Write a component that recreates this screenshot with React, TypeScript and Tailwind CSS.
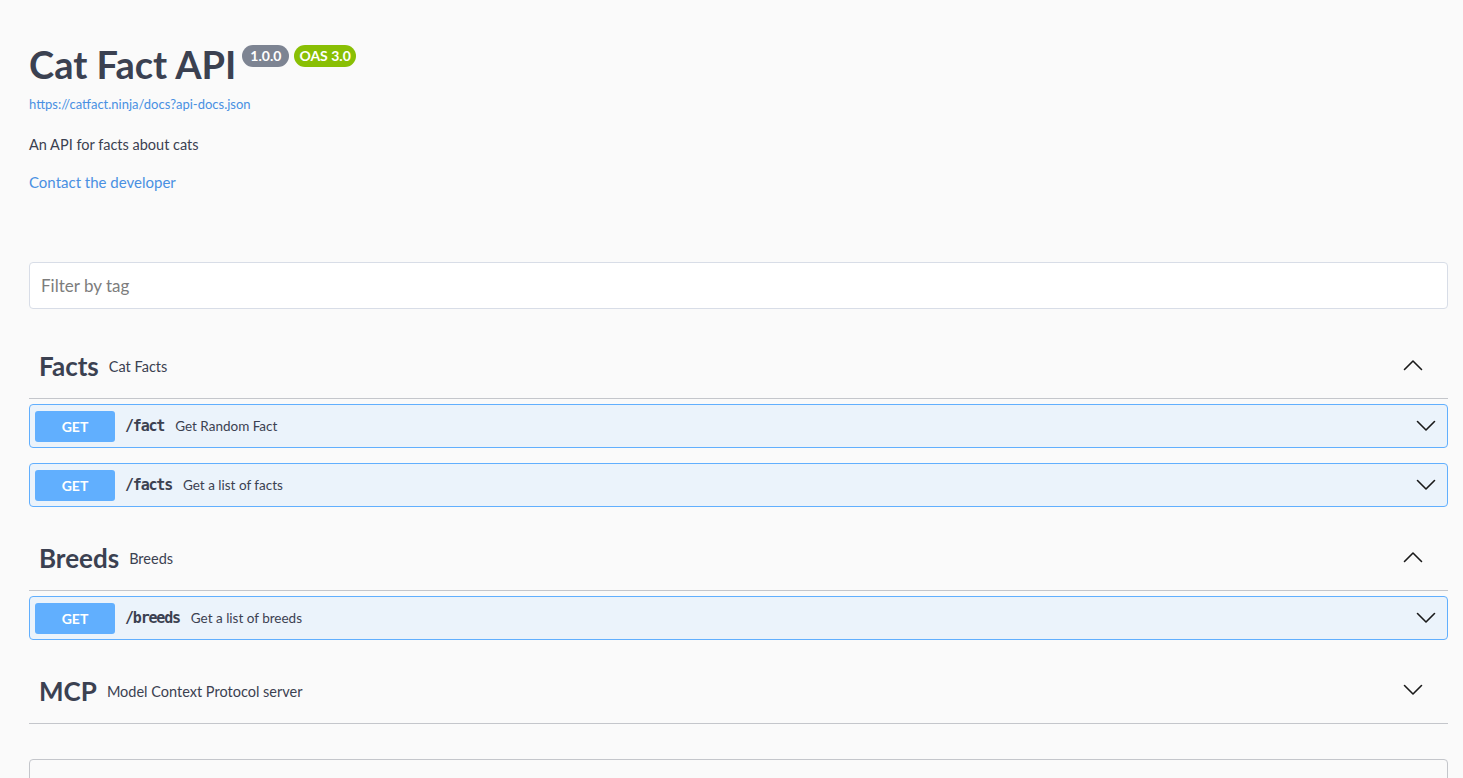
import React from 'react';

interface Op {
    method: string;
    path: string;
    summary: string;
}

interface Tag {
    name: string;
    description: string;
    open: boolean;
    ops: Op[];
}

const tags: Tag[] = [
    {
        name: "Facts", description: "Cat Facts", open: true,
        ops: [
            { method: "GET", path: "/fact", summary: "Get Random Fact" },
            { method: "GET", path: "/facts", summary: "Get a list of facts" },
        ]
    },
    {
        name: "Breeds", description: "Breeds", open: true,
        ops: [{ method: "GET", path: "/breeds", summary: "Get a list of breeds" }]
    },
    { name: "MCP", description: "Model Context Protocol server", open: false, ops: [] },
];

// thin chevrons, like the swagger arrows
const ArrowDown = () => (
    <svg width="20" height="12" viewBox="0 0 20 12" fill="none" className="stroke-[#1a1a1a]">
        <polyline points="1.5,1.5 10,10 18.5,1.5" strokeWidth="1.6" strokeLinecap="round" strokeLinejoin="round" />
    </svg>
);

const ArrowUp = () => (
    <svg width="20" height="12" viewBox="0 0 20 12" fill="none" className="stroke-[#1a1a1a]">
        <polyline points="1.5,10.5 10,2 18.5,10.5" strokeWidth="1.6" strokeLinecap="round" strokeLinejoin="round" />
    </svg>
);

const Operation = ({ op }: { op: Op }) => (
    <div className="mb-[15px] flex h-[44px] items-center rounded-[4px] border border-[#61affe] bg-[#ebf3fb] pl-[5px] pr-[11px]">
        <span className="flex h-[31px] w-[80px] items-center justify-center rounded-[3px] bg-[#61affe] text-[14px] font-bold text-white">
            {op.method}
        </span>
        <span className="ml-[10px] font-['DejaVu_Sans_Mono',monospace] text-[15px] font-semibold tracking-[-1.2px] text-[#3b4151]">
            {op.path}
        </span>
        <span className="ml-[11px] flex-1 text-[13.5px] text-[#3b4151]">{op.summary}</span>
        <ArrowDown />
    </div>
);

const TagSection = ({ tag }: { tag: Tag }) => (
    <div className="mb-[20px]">
        <div className="flex h-[64px] items-center border-b border-[#c4c6cb] pl-[10px] pr-[25px]">
            <h3 className="text-[26px] font-bold text-[#3b4151]">{tag.name}</h3>
            <span className="ml-[10px] flex-1 text-[14.5px] text-[#3b4151]">{tag.description}</span>
            <div className="-mt-[3px]">{tag.open ? <ArrowUp /> : <ArrowDown />}</div>
        </div>
        {tag.open && (
            <div className="mt-[5px]">
                {tag.ops.map(op => <Operation key={op.path} op={op} />)}
            </div>
        )}
    </div>
);

const App = () => {
    return (
        <div className="min-h-screen bg-[#fafafa] font-['Lato',sans-serif] text-[#3b4151]">
            <div className="pl-[29px] pr-[15px] pt-[42px]">
                <div className="flex items-start">
                    <h1 className="text-[38px] font-bold leading-[44px]">Cat Fact API</h1>
                    <span className="ml-[6px] mt-[3px] rounded-full bg-[#7d8492] px-[8px] text-[14px] font-bold leading-[22px] text-white">1.0.0</span>
                    <span className="ml-[5px] mt-[3px] rounded-full bg-[#89bf04] px-[5px] text-[14px] font-bold leading-[22px] text-white">OAS 3.0</span>
                </div>
                <a className="mt-[10px] block text-[13px] leading-[16px] text-[#4990e2]">https://catfact.ninja/docs?api-docs.json</a>
                <p className="mt-[23px] text-[14.5px] leading-[20px]">An API for facts about cats</p>
                <a className="mt-[17px] block text-[15px] leading-[20px] text-[#4990e2]">Contact the developer</a>

                <input
                    className="mt-[70px] block h-[47px] w-full rounded-[4px] border border-[#d8dde7] bg-white px-[11px] text-[17px] text-[#3b4151] outline-none placeholder:text-[#7d7d7d]"
                    placeholder="Filter by tag"
                />

                <div className="mt-[26px]">
                    {tags.map(tag => <TagSection key={tag.name} tag={tag} />)}
                </div>

                <div className="mt-[35px] h-[200px] rounded-[4px] border border-[#c4c6cb] pl-[12px] pt-[11px]">
                    <h4 className="text-[16px] font-bold leading-[24px]">Schemas</h4>
                </div>
            </div>
        </div>
    );
};

export default App;
